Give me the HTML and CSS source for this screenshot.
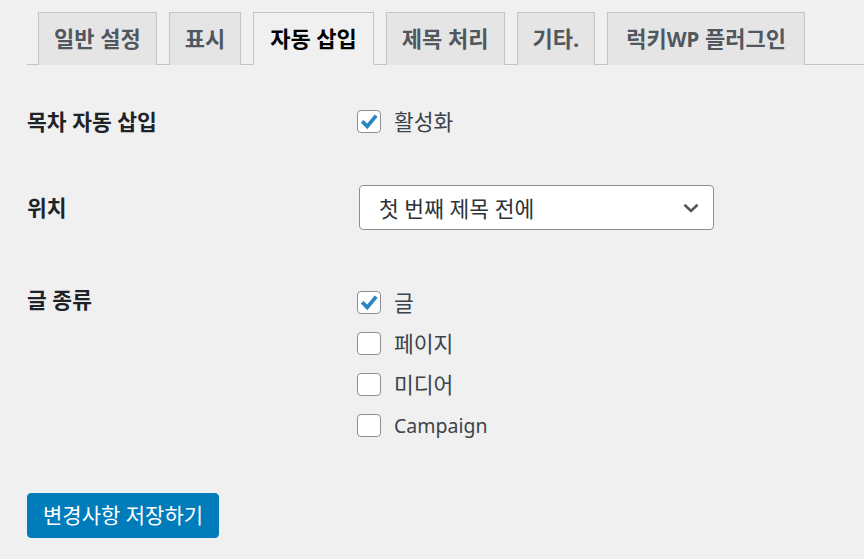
FILE: index.html
```html
<!DOCTYPE html>
<html lang="ko">
<head>
<meta charset="utf-8">
<link rel="stylesheet" href="styles.css">
</head>
<body>
<div class="wrap">
  <nav class="tabs">
    <a class="tab">일반 설정</a>
    <a class="tab">표시</a>
    <a class="tab active">자동 삽입</a>
    <a class="tab">제목 처리</a>
    <a class="tab">기타.</a>
    <a class="tab tab-wide">럭키<span class="latin">WP</span> 플러그인</a>
  </nav>

  <div class="row row-1">
    <div class="label">목차 자동 삽입</div>
    <div class="field">
      <label class="check"><span class="box checked"><svg viewBox="0 0 22 21"><path d="M4.2 10.2 L9.2 15.4 L18.2 4.6" /></svg></span><span>활성화</span></label>
    </div>
  </div>

  <div class="row row-2">
    <div class="label">위치</div>
    <div class="field">
      <div class="select"><span>첫 번째 제목 전에</span><svg class="chev" viewBox="0 0 16 10"><path d="M1.5 1.8 L8 8 L14.5 1.8" /></svg></div>
    </div>
  </div>

  <div class="row row-3">
    <div class="label">글 종류</div>
    <div class="field list">
      <label class="check"><span class="box checked"><svg viewBox="0 0 22 21"><path d="M4.2 10.2 L9.2 15.4 L18.2 4.6" /></svg></span><span>글</span></label>
      <label class="check"><span class="box"></span><span>페이지</span></label>
      <label class="check"><span class="box"></span><span>미디어</span></label>
      <label class="check"><span class="box"></span><span class="latin">Campaign</span></label>
    </div>
  </div>

  <button class="save">변경사항 저장하기</button>
</div>
</body>
</html>
```
FILE: styles.css
```css
html, body {
  margin: 0;
  padding: 0;
  background: #f0f0f1;
}
body {
  font-family: "Noto Sans", "Noto Sans CJK KR", sans-serif;
  color: #3c434a;
  font-size: 21.5px;
}
.latin {
  font-size: 19.5px;
}
.wrap {
  padding-left: 27px;
}
.tabs {
  display: flex;
  gap: 12px;
  padding: 12px 0 0 11px;
  border-bottom: 1px solid #c3c4c7;
  height: 52px;
}
.tab {
  box-sizing: border-box;
  display: block;
  height: 53px;
  line-height: 51px;
  background: #e5e5e5;
  border: 1px solid #c3c4c7;
  border-bottom: none;
  color: #50575e;
  font-weight: 700;
  font-size: 22px;
  padding: 0 15px;
  white-space: nowrap;
}
.tab-wide {
  padding: 0 18px;
}
.tab .latin {
  font-size: 20.5px;
}
.tab.active {
  background: #f0f0f1;
  color: #000;
  padding: 0 16px;
  position: relative;
  z-index: 1;
  border-bottom: 1px solid #f0f0f1;
}
.row {
  display: grid;
  grid-template-columns: 330px auto;
}
.label {
  font-weight: 700;
  color: #1d2327;
  line-height: 27px;
}
.row-1 {
  margin-top: 43px;
}
.row-2 {
  margin-top: 50px;
  align-items: center;
}
.row-3 {
  margin-top: 59px;
}
.row-3 .label {
  margin-top: -3px;
}
.check {
  display: flex;
  align-items: center;
  height: 27px;
  gap: 13px;
  line-height: 27px;
}
.box {
  box-sizing: border-box;
  width: 24px;
  height: 23px;
  border: 1px solid #8c8f94;
  border-radius: 4px;
  background: #fff;
  display: block;
  flex: none;
}
.box svg {
  display: block;
  width: 22px;
  height: 21px;
}
.box svg path {
  fill: none;
  stroke: #2a86c3;
  stroke-width: 3.8;
  stroke-linecap: butt;
  stroke-linejoin: miter;
}
.list {
  display: flex;
  flex-direction: column;
  gap: 14px;
}
.select {
  box-sizing: border-box;
  margin-left: 2px;
  width: 355px;
  height: 45px;
  background: #fff;
  border: 1px solid #8c8f94;
  border-radius: 4px;
  display: flex;
  align-items: center;
  justify-content: space-between;
  padding: 0 14px 0 19px;
  color: #2c3338;
}
.chev {
  width: 16px;
  height: 10px;
}
.chev path {
  fill: none;
  stroke: #50575e;
  stroke-width: 2.6;
}
.save {
  display: block;
  margin-top: 54px;
  height: 45px;
  padding: 0 15px;
  background: #007cba;
  border: 1px solid #007cba;
  border-radius: 4px;
  color: #fff;
  font-family: "Noto Sans", "Noto Sans CJK KR", sans-serif;
  font-size: 21px;
  line-height: 1;
}
```
